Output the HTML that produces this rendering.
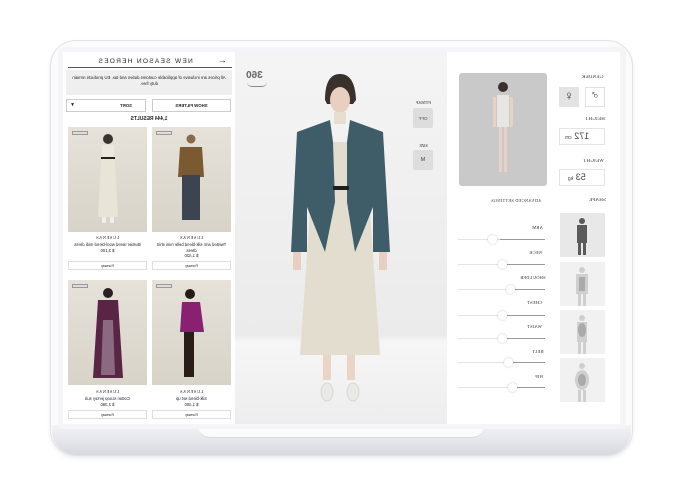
<!DOCTYPE html>
<html><head><meta charset="utf-8"><style>
*{margin:0;padding:0;box-sizing:border-box}
body{width:681px;height:490px;background:#fff;position:relative;overflow:hidden;font-family:"Liberation Sans",sans-serif;color:#222}
.a{position:absolute}
.m{transform:scaleX(-1);display:block}
.t{position:absolute;font-size:4px;text-align:center;white-space:nowrap}
.lbl{position:absolute;font-family:"Liberation Serif",serif;font-size:5px;color:#333;letter-spacing:.2px}
.card{position:absolute;background:linear-gradient(#e6e2da,#d8d3c8);width:79px;height:105px}
.tag{position:absolute;left:4px;top:4px;width:16px;height:4px;border:1px solid #999;background:#ddd}
.btn{position:absolute;border:1px solid #ddd;height:9px;width:79px;background:#fff}
.sl{position:absolute;height:1px;background:#e4e4e4;left:458px;width:87px}
.sl i{position:absolute;right:0;top:0;height:1px;background:#999}
.sl b{position:absolute;top:-4px;width:9px;height:9px;border-radius:50%;background:#fff;box-shadow:0 0 2px rgba(0,0,0,.25)}
.shp{position:absolute;left:560px;width:45px;height:44px;background:#f1f1f1}
</style></head><body>
<!-- frame -->
<div class="a" style="left:50px;top:40px;width:583px;height:416px;border-radius:26px;background:#fbfbfc;border:1px solid #e2e2e6;box-shadow:0 2px 4px rgba(0,0,0,.08)"></div>
<div class="a" style="left:52px;top:425px;width:579px;height:30px;border-radius:0 0 24px 24px;background:linear-gradient(#f3f3f6,#d8d9e0)"></div>
<div class="a" style="left:198px;top:420px;width:286px;height:18px;border-radius:0 0 12px 12px;background:#fbfbfc;border-bottom:1px solid #d8d8de"></div>
<div class="a" style="left:58px;top:47px;width:568px;height:382px;border-radius:6px;background:#f5f5f7"></div>
<div class="a" style="left:63px;top:52px;width:557px;height:372px;background:#fff"></div>

<!-- left panel -->
<div class="a" style="left:68px;top:56px;width:164px;height:12px;border-bottom:1px solid #555"></div>
<div class="t m" style="left:70px;top:58px;width:150px;font-size:6.5px;letter-spacing:1.3px">NEW SEASON HEROES</div>
<div class="t m" style="left:218px;top:55px;font-size:9px">←</div>
<div class="a" style="left:66px;top:70px;width:166px;height:25px;background:#efefef"></div>
<div class="t m" style="left:68px;top:75px;width:162px;font-size:4.3px;white-space:normal;line-height:6px">All prices are inclusive of applicable customs duties and tax. EU products remain duty free.</div>
<div class="a" style="left:66px;top:99px;width:80px;height:13px;border:1px solid #ccc"></div>
<div class="t m" style="left:70px;top:102px;font-size:5px">▼</div>
<div class="t m" style="left:120px;top:103px;font-size:4.3px;font-weight:bold">SORT</div>
<div class="a" style="left:152px;top:99px;width:79px;height:13px;border:1px solid #ccc"></div>
<div class="t m" style="left:152px;top:103px;width:79px;font-size:4.3px;font-weight:bold">SHOW FILTERS</div>
<div class="t m" style="left:66px;top:116px;width:166px;font-size:5px;font-weight:bold">1,444 RESULTS</div>

<div class="card" style="left:68px;top:127px"><div class="tag"></div>
<svg width="79" height="105"><circle cx="40" cy="12" r="5" fill="#3a3330"/><rect x="34" y="18" width="12" height="22" fill="#ece8e0"/><rect x="33" y="30" width="14" height="2" fill="#222"/><path d="M33 32 L47 32 L50 90 L30 90 Z" fill="#e9e4d8"/><rect x="34" y="90" width="4" height="6" fill="#eee"/><rect x="42" y="90" width="4" height="6" fill="#eee"/></svg></div>
<div class="card" style="left:152px;top:127px"><div class="tag"></div>
<svg width="79" height="105"><circle cx="39" cy="12" r="4.5" fill="#8a6a4a"/><path d="M28 20 L50 20 L52 50 L26 50 Z" fill="#7a5a30"/><rect x="30" y="48" width="18" height="45" fill="#3b4450"/></svg></div>
<div class="t m" style="left:68px;top:235px;width:79px;font-family:'Liberation Serif',serif;font-size:4.5px;letter-spacing:.5px">LUSENAS</div>
<div class="t m" style="left:68px;top:242px;width:79px;font-size:4.2px;white-space:normal;line-height:5.5px">Bustier tiered wool-blend midi dress<br>$ 3,100</div>
<div class="btn" style="left:68px;top:261px"><span class="t m" style="left:0;top:2px;width:77px;font-size:3.5px">Runway</span></div>
<div class="t m" style="left:152px;top:235px;width:79px;font-family:'Liberation Serif',serif;font-size:4.5px;letter-spacing:.5px">LUSENAS</div>
<div class="t m" style="left:152px;top:242px;width:79px;font-size:4.2px;white-space:normal;line-height:5.5px">Twisted arm silk-blend belle mini shirt dress<br>$ 1,420</div>
<div class="btn" style="left:152px;top:261px"><span class="t m" style="left:0;top:2px;width:77px;font-size:3.5px">Runway</span></div>

<div class="card" style="left:68px;top:280px"><div class="tag"></div>
<svg width="79" height="105"><circle cx="40" cy="13" r="5" fill="#2a2222"/><path d="M30 20 L50 20 L55 98 L25 98 Z" fill="#5a2445"/><path d="M35 40 L45 40 L47 95 L33 95 Z" fill="#8a6a80"/></svg></div>
<div class="card" style="left:152px;top:280px"><div class="tag"></div>
<svg width="79" height="105"><circle cx="38" cy="14" r="5" fill="#2a1a14"/><path d="M30 22 L48 22 L52 52 L28 52 Z" fill="#8a2070"/><rect x="32" y="52" width="10" height="45" fill="#2a1d18"/></svg></div>
<div class="t m" style="left:68px;top:389px;width:79px;font-family:'Liberation Serif',serif;font-size:4.5px;letter-spacing:.5px">LUSENAS</div>
<div class="t m" style="left:68px;top:396px;width:79px;font-size:4.2px;line-height:5.5px">Cotton scoop jersey suit<br>$ 2,390</div>
<div class="btn" style="left:68px;top:410px"><span class="t m" style="left:0;top:2px;width:77px;font-size:3.5px">Runway</span></div>
<div class="t m" style="left:152px;top:389px;width:79px;font-family:'Liberation Serif',serif;font-size:4.5px;letter-spacing:.5px">LUSENAS</div>
<div class="t m" style="left:152px;top:396px;width:79px;font-size:4.2px;line-height:5.5px">Silk-blend set up<br>$ 1,400</div>
<div class="btn" style="left:152px;top:410px"><span class="t m" style="left:0;top:2px;width:77px;font-size:3.5px">Runway</span></div>

<!-- center -->
<div class="a" style="left:235px;top:52px;width:212px;height:372px;background:linear-gradient(#f4f4f4 0%,#ebebeb 76%,#f6f6f6 78%,#ededed 100%)"></div>
<div class="t m" style="left:246px;top:70px;font-size:10px;color:#666;font-weight:bold">360</div>
<div class="a" style="left:247px;top:82px;width:20px;height:5px;border-bottom:1.5px solid #888;border-radius:0 0 10px 10px"></div>
<div class="t m" style="left:410px;top:100px;width:27px;font-size:4px;font-family:'Liberation Serif',serif">FITMAP</div>
<div class="a" style="left:413px;top:108px;width:20px;height:20px;background:#ddd;border-radius:2px"></div>
<div class="t m" style="left:413px;top:116px;width:20px;font-size:4.5px;color:#555">OFF</div>
<div class="t m" style="left:410px;top:143px;width:27px;font-size:4px;font-family:'Liberation Serif',serif">SIZE</div>
<div class="a" style="left:413px;top:150px;width:20px;height:20px;background:#ddd;border-radius:2px"></div>
<div class="t m" style="left:413px;top:157px;width:20px;font-size:5.5px;color:#444">M</div>
<svg class="a" style="left:235px;top:52px" width="212" height="372">
<path d="M90 48 Q90 22 105 22 Q120 22 121 48 L118 52 L92 52 Z" fill="#3a302c"/>
<ellipse cx="105" cy="48" rx="10" ry="13" fill="#e9cfc0"/>
<path d="M94 40 Q105 28 116 40 L116 34 Q105 24 94 34 Z" fill="#3a302c"/>
<rect x="99" y="60" width="12" height="12" fill="#e6dfd0"/>
<path d="M65 303 L80 90 L130 90 L145 303 Z" fill="#e3ddcf"/>
<path d="M95 68 L62 80 L56 200 L72 200 L72 155 L90 200 L100 150 L98 90 Z" fill="#3f5d69"/>
<path d="M115 68 L148 80 L155 200 L138 200 L138 155 L120 200 L112 150 L112 90 Z" fill="#3f5d69"/>
<rect x="98" y="134" width="16" height="4" fill="#1e1e1e"/>
<rect x="58" y="200" width="8" height="18" fill="#e8cfc0"/><rect x="144" y="200" width="8" height="18" fill="#e8cfc0"/>
<rect x="88" y="303" width="8" height="25" fill="#ead4c6"/><rect x="112" y="303" width="8" height="25" fill="#ead4c6"/>
<ellipse cx="92" cy="340" rx="6" ry="9" fill="#e9e9e7" stroke="#d4d4d2" stroke-width=".8"/><ellipse cx="118" cy="340" rx="6" ry="9" fill="#e9e9e7" stroke="#d4d4d2" stroke-width=".8"/>
</svg>

<!-- right panel -->
<div class="a" style="left:459px;top:73px;width:88px;height:113px;background:#c9c9c9;border-radius:3px"></div>
<svg class="a" style="left:459px;top:73px" width="88" height="113">
<circle cx="44" cy="14" r="5" fill="#3a302c"/><rect x="38" y="22" width="12" height="32" fill="#e8e6e2"/>
<rect x="40" y="54" width="3" height="45" fill="#e6d3c6"/><rect x="45" y="54" width="3" height="45" fill="#e6d3c6"/>
<rect x="34" y="24" width="3" height="30" fill="#e6d3c6"/><rect x="51" y="24" width="3" height="30" fill="#e6d3c6"/></svg>
<div class="lbl m" style="left:582px;top:75px">GENDER</div>
<div class="a" style="left:559px;top:87px;width:20px;height:20px;background:#e3e3e3"></div>
<div class="t m" style="left:559px;top:88px;width:20px;font-size:13px;color:#333">♀</div>
<div class="a" style="left:585px;top:87px;width:20px;height:20px;border:1px solid #e0e0e0"></div>
<div class="t m" style="left:585px;top:88px;width:20px;font-size:12px;color:#333">♂</div>
<div class="lbl m" style="left:585px;top:117px">HEIGHT</div>
<div class="a" style="left:559px;top:128px;width:46px;height:17px;border:1px solid #e4e4e4"></div>
<div class="t m" style="left:565px;top:131px;font-size:9px;color:#444">172 <span style="font-size:5px">cm</span></div>
<div class="lbl m" style="left:583px;top:159px">WEIGHT</div>
<div class="a" style="left:559px;top:169px;width:46px;height:17px;border:1px solid #e4e4e4"></div>
<div class="t m" style="left:568px;top:172px;font-size:9px;color:#444">53 <span style="font-size:5px">kg</span></div>
<div class="lbl m" style="left:589px;top:198px">SHAPE</div>
<div class="lbl m" style="left:491px;top:198px;font-size:4.5px">ADVANCED SETTINGS</div>
<div class="shp" style="top:213px;background:#e8e8e8"></div>
<div class="shp" style="top:262px"></div>
<div class="shp" style="top:310px"></div>
<div class="shp" style="top:358px"></div>
<svg class="a" style="left:560px;top:213px" width="45" height="190">
<g fill="#5a5a5a"><circle cx="22" cy="8" r="3"/><rect x="17" y="12" width="10" height="18"/><rect x="18" y="30" width="3" height="12"/><rect x="23" y="30" width="3" height="12"/></g>
<g fill="#cfcfcf"><circle cx="22" cy="57" r="3"/><rect x="16" y="61" width="12" height="20"/><rect x="18" y="81" width="3" height="12"/><rect x="23" y="81" width="3" height="12"/>
<circle cx="22" cy="105" r="3"/><rect x="17" y="109" width="10" height="20"/><rect x="18" y="129" width="3" height="12"/><rect x="23" y="129" width="3" height="12"/>
<circle cx="22" cy="153" r="3"/><ellipse cx="22" cy="167" rx="7" ry="10"/><rect x="18" y="177" width="3" height="12"/><rect x="23" y="177" width="3" height="12"/></g>
<g fill="#aaa"><rect x="19" y="64" width="6" height="14"/><ellipse cx="22" cy="117" rx="4" ry="7"/><ellipse cx="22" cy="167" rx="4" ry="6"/></g></svg>

<div class="lbl m" style="left:532px;top:225px;font-size:4.5px">ARM</div>
<div class="sl" style="top:239px"><i style="width:45px"></i><b style="left:30px"></b></div>
<div class="lbl m" style="left:529px;top:250px;font-size:4.5px">NECK</div>
<div class="sl" style="top:264px"><i style="width:38px"></i><b style="left:40px"></b></div>
<div class="lbl m" style="left:520px;top:275px;font-size:4.5px">SHOULDER</div>
<div class="sl" style="top:289px"><i style="width:30px"></i><b style="left:48px"></b></div>
<div class="lbl m" style="left:527px;top:300px;font-size:4.5px">CHEST</div>
<div class="sl" style="top:315px"><i style="width:38px"></i><b style="left:40px"></b></div>
<div class="lbl m" style="left:527px;top:324px;font-size:4.5px">WAIST</div>
<div class="sl" style="top:338px"><i style="width:38px"></i><b style="left:40px"></b></div>
<div class="lbl m" style="left:532px;top:349px;font-size:4.5px">BELT</div>
<div class="sl" style="top:362px"><i style="width:32px"></i><b style="left:46px"></b></div>
<div class="lbl m" style="left:535px;top:374px;font-size:4.5px">HIP</div>
<div class="sl" style="top:387px"><i style="width:28px"></i><b style="left:50px"></b></div>
</body></html>
